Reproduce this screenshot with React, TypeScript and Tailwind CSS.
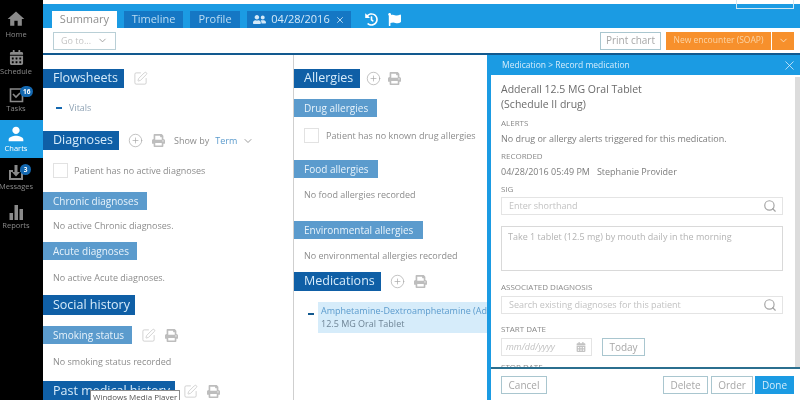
import { ChevronDown, CirclePlus, Search, SquarePen, X } from "lucide-react";
import { ReactNode } from "react";
import { FaCalendarAlt, FaFlag, FaHistory, FaPrint, FaUserFriends } from "react-icons/fa";
import { MdHome, MdPerson } from "react-icons/md";

const SectionTitle = ({ children, className = "" }: { children: ReactNode; className?: string }) => (
  <div className={`flex h-[19px] items-center whitespace-nowrap bg-[#0f5fa6] px-[10px] text-[12.5px] font-medium text-[#d7ecfb] ${className}`}>
    {children}
  </div>
);

const SubTitle = ({ children, className = "" }: { children: ReactNode; className?: string }) => (
  <div className={`flex h-[18px] items-center whitespace-nowrap bg-[#5b9bcd] px-[10px] text-[10px] text-[#e8f3fb] ${className}`}>
    {children}
  </div>
);

const Note = ({ children, className = "" }: { children: ReactNode; className?: string }) => (
  <p className={`pl-[10px] text-[9px] leading-[12px] text-[#8c8c8c] ${className}`}>{children}</p>
);

const Edit = () => <SquarePen size={15} strokeWidth={1.2} className="text-[#c4c4c4]" />;
const Plus = () => <CirclePlus size={15} strokeWidth={1.1} className="text-[#a8a8a8]" />;
const Printer = () => <FaPrint size={13} className="text-[#bdbdbd]" />;

const Checkbox = () => <div className="h-[15px] w-[15px] border border-[#e2e2e2]" />;

const Label = ({ children, className = "" }: { children: ReactNode; className?: string }) => (
  <p className={`text-[8px] leading-[10px] text-[#8a8a8a] ${className}`}>{children}</p>
);

const SearchInput = ({ text, className = "" }: { text: string; className?: string }) => (
  <div className={`flex h-[18px] w-[282px] items-center justify-between border border-[#e4e4e4] pl-[7px] pr-[5px] ${className}`}>
    <span className="text-[9px] text-[#c2c2c2]">{text}</span>
    <Search size={14} strokeWidth={2} className="text-[#a3a3a3]" />
  </div>
);

const OutlineButton = ({ children, className = "" }: { children: ReactNode; className?: string }) => (
  <div className={`flex h-[18px] items-center justify-center border border-[#a9c6cf] text-[10px] text-[#a7a7a7] ${className}`}>
    {children}
  </div>
);

const NavItem = ({ label, icon, active, badge, className = "" }: { label: string; icon: ReactNode; active?: boolean; badge?: string; className?: string }) => (
  <div className={`relative flex w-[43px] flex-col items-center pr-[11px] ${active ? "bg-[#1b9be3] text-white" : "text-[#8a8a8a]"} ${className}`}>
    {icon}
    <span className="whitespace-nowrap text-[7.5px] leading-[10px]">{label}</span>
    {badge && (
      <span className="absolute left-[20px] top-[0px] flex h-[11px] min-w-[11px] items-center justify-center rounded-full bg-[#1468b0] px-[3px] text-[6.5px] font-bold text-white">
        {badge}
      </span>
    )}
  </div>
);

const Sidebar = () => (
  <div className="flex h-[400px] w-[43px] shrink-0 flex-col bg-black pt-[9px]">
    <NavItem label="Home" icon={<MdHome size={20} />} />
    <NavItem label="Schedule" icon={<FaCalendarAlt size={15} className="my-[1px]" />} className="mt-[10px]" />
    <NavItem
      label="Tasks"
      badge="16"
      className="mt-[10px]"
      icon={
        <svg width="15" height="17" viewBox="0 0 15 17" fill="none" stroke="currentColor" strokeWidth="1.6">
          <path d="M13 3H1.5v12.5H13.500V8" />
          <path d="M4 8l3 3 4-4" />
        </svg>
      }
    />
    <NavItem
      label="Charts"
      active
      className="mt-[7px] h-[38px] justify-center"
      icon={<MdPerson size={22} className="-my-[2px]" />}
    />
    <NavItem
      label="Messages"
      badge="3"
      className="mt-[6px]"
      icon={
        <svg width="16" height="17" viewBox="0 0 16 17" fill="currentColor">
          <path d="M1 6h4v2H3v6h10V8h-1V6h3v10H1z" />
          <path d="M6.5 1h3v7h2.500L8 12.500 4 8h2.500z" />
        </svg>
      }
    />
    <NavItem
      label="Reports"
      className="mt-[13px]"
      icon={
        <svg width="15" height="16" viewBox="0 0 15 16" fill="currentColor">
          <rect x="0.500" y="9" width="3.500" height="7" />
          <rect x="5.500" y="1" width="3.500" height="15" />
          <rect x="10.500" y="5" width="3.500" height="11" />
        </svg>
      }
    />
  </div>
);

const TopBar = () => (
  <div className="flex h-[24px] items-end bg-[#1b9be3] pl-[9px] text-[11px]">
    <div className="flex h-[17px] w-[65px] items-center justify-center bg-white text-[#8f8f8f]">Summary</div>
    <div className="ml-[7px] flex h-[17px] w-[59px] items-center justify-center bg-[#1577c4] text-[#bcdcf2]">Timeline</div>
    <div className="ml-[7px] flex h-[17px] w-[50px] items-center justify-center bg-[#1577c4] text-[#bcdcf2]">Profile</div>
    <div className="ml-[7px] flex h-[17px] w-[104px] items-center justify-center gap-[5px] bg-[#1577c4] text-[#d4e9f8]">
      <FaUserFriends size={13} />
      <span>04/28/2016</span>
      <X size={10} />
    </div>
    <FaHistory size={13} className="mb-[2px] ml-[14px] text-white" />
    <FaFlag size={13} className="mb-[2px] ml-[10px] text-white" />
  </div>
);

const ActionBar = () => (
  <div className="flex h-[27px] items-center justify-between border-b-2 border-[#12598f] pl-[10px] pr-[6px]">
    <div className="flex h-[18px] w-[63px] items-center justify-between border border-[#b9cfd6] px-[7px] text-[9px] text-[#c4c4c4]">
      <span>Go to...</span>
      <ChevronDown size={11} className="text-[#9d9d9d]" />
    </div>
    <div className="flex items-center">
      <OutlineButton className="w-[61px] text-[9.500px]">Print chart</OutlineButton>
      <div className="ml-[5px] flex h-[18px] w-[105px] items-center justify-center bg-[#f7902c] text-[8.500px] text-[#fbd4a6]">
        New encounter (SOAP)
      </div>
      <div className="ml-[1px] flex h-[18px] w-[22px] items-center justify-center bg-[#f7902c] text-[#fbe0c0]">
        <ChevronDown size={11} />
      </div>
    </div>
  </div>
);

const LeftColumn = () => (
  <div className="w-[250px] shrink-0 overflow-hidden pt-[14px]">
    <div className="flex items-center gap-[9px]">
      <SectionTitle className="w-[81px]">Flowsheets</SectionTitle>
      <Edit />
    </div>
    <div className="mt-[14px] flex items-center gap-[7px] pl-[13px] text-[9px] leading-[12px] text-[#8fa3b5]">
      <span className="h-[2px] w-[6px] bg-[#1468b0]" />
      Vitals
    </div>
    <div className="mt-[17px] flex items-center">
      <SectionTitle className="w-[76px]">Diagnoses</SectionTitle>
      <span className="ml-[9px]"><Plus /></span>
      <span className="ml-[9px]"><Printer /></span>
      <span className="ml-[9px] text-[9px] text-[#8c8c8c]">Show by</span>
      <span className="ml-[6px] text-[9px] text-[#5b9bcd]">Term</span>
      <ChevronDown size={12} className="ml-[5px] text-[#9d9d9d]" />
    </div>
    <div className="mt-[13px] flex items-center gap-[6px] pl-[10px]">
      <Checkbox />
      <span className="text-[9px] text-[#8c8c8c]">Patient has no active diagnoses</span>
    </div>
    <SubTitle className="mt-[14px] w-[104px]">Chronic diagnoses</SubTitle>
    <Note className="mt-[10px]">No active Chronic diagnoses.</Note>
    <SubTitle className="mt-[10px] w-[94px]">Acute diagnoses</SubTitle>
    <Note className="mt-[12px]">No active Acute diagnoses.</Note>
    <SectionTitle className="mt-[11px] h-[20px] w-[92px]">Social history</SectionTitle>
    <div className="mt-[11px] flex items-center">
      <SubTitle className="w-[89px]">Smoking status</SubTitle>
      <span className="ml-[9px]"><Edit /></span>
      <span className="ml-[9px]"><Printer /></span>
    </div>
    <Note className="mt-[12px]">No smoking status recorded</Note>
    <div className="mt-[13px] flex items-center">
      <SectionTitle className="h-[20px] w-[132px]">Past medical history</SectionTitle>
      <span className="ml-[8px]"><Edit /></span>
      <span className="ml-[9px]"><Printer /></span>
    </div>
  </div>
);

const MiddleColumn = () => (
  <div className="w-[194px] shrink-0 overflow-hidden border-l border-[#cfcfcf] pt-[14px]">
    <div className="flex items-center">
      <SectionTitle className="h-[18px] w-[66px]">Allergies</SectionTitle>
      <span className="ml-[6px]"><Plus /></span>
      <span className="ml-[7px]"><Printer /></span>
    </div>
    <SubTitle className="mt-[11px] w-[83px]">Drug allergies</SubTitle>
    <div className="mt-[11px] flex items-center gap-[7px] pl-[10px]">
      <Checkbox />
      <span className="whitespace-nowrap text-[9px] text-[#8c8c8c]">Patient has no known drug allergies</span>
    </div>
    <SubTitle className="mt-[17px] w-[84px]">Food allergies</SubTitle>
    <Note className="mt-[11px]">No food allergies recorded</Note>
    <SubTitle className="mt-[20px] w-[129px]">Environmental allergies</SubTitle>
    <Note className="mt-[11px]">No environmental allergies recorded</Note>
    <div className="mt-[10px] flex items-center">
      <SectionTitle className="w-[87px]">Medications</SectionTitle>
      <span className="ml-[9px]"><Plus /></span>
      <span className="ml-[9px]"><Printer /></span>
    </div>
    <div className="mt-[11px] flex items-start">
      <span className="ml-[14px] mt-[11px] h-[2px] w-[6px] shrink-0 bg-[#12598f]" />
      <div className="ml-[4px] h-[31px] flex-1 overflow-hidden bg-[#d6ecfa] py-[3px] pl-[3px] text-[9px] leading-[12.500px]">
        <p className="whitespace-nowrap text-[#5b9bcd]">Amphetamine-Dextroamphetamine (Ade</p>
        <p className="text-[#6f8596]">12.5 MG Oral Tablet</p>
      </div>
    </div>
  </div>
);

const MedicationPanel = () => (
  <div className="flex min-w-0 flex-1 flex-col border-l-4 border-[#1b9be3]">
    <div className="flex h-[20px] shrink-0 items-center justify-between bg-[#1b9be3] pl-[11px] pr-[3px] text-[8.500px] text-[#d4ecfb]">
      <span>Medication &gt; Record medication</span>
      <X size={15} strokeWidth={1.2} className="text-[#e3f3fc]" />
    </div>
    <div className="relative min-h-0 flex-1 overflow-hidden pl-[10px] pt-[7px]">
      <div className="absolute bottom-0 right-0 top-[2px] w-[5px] bg-[#dcdcdc]" />
      <p className="text-[10.500px] leading-[14.500px] text-[#6b6b6b]">Adderall 12.5 MG Oral Tablet</p>
      <p className="text-[10.500px] leading-[14.500px] text-[#6b6b6b]">(Schedule II drug)</p>
      <Label className="mt-[7px]">ALERTS</Label>
      <p className="mt-[5px] text-[9px] leading-[12px] text-[#7d7d7d]">No drug or allergy alerts triggered for this medication.</p>
      <Label className="mt-[6px]">RECORDED</Label>
      <p className="mt-[5px] text-[9px] leading-[12px] text-[#7d7d7d]">
        04/28/2016 05:49 PM&nbsp;&nbsp; Stephanie Provider
      </p>
      <Label className="mt-[6px]">SIG</Label>
      <SearchInput text="Enter shorthand" className="mt-[3px]" />
      <div className="mt-[11px] h-[45px] w-[282px] border border-[#d9d9d9] px-[6px] py-[3px] text-[9px] text-[#b3b3b3]">
        Take 1 tablet (12.5 mg) by mouth daily in the morning
      </div>
      <Label className="mt-[11px]">ASSOCIATED DIAGNOSIS</Label>
      <SearchInput text="Search existing diagnoses for this patient" className="mt-[4px]" />
      <Label className="mt-[10px]">START DATE</Label>
      <div className="mt-[4px] flex items-center">
        <div className="flex h-[18px] w-[91px] items-center justify-between border border-[#e4e4e4] pl-[4px] pr-[5px]">
          <span className="text-[9px] italic text-[#c2c2c2]">mm/dd/yyyy</span>
          <FaCalendarAlt size={10} className="text-[#c2c2c2]" />
        </div>
        <OutlineButton className="ml-[10px] w-[43px]">Today</OutlineButton>
      </div>
      <Label className="mt-[6px]">STOP DATE</Label>
    </div>
    <div className="flex h-[33px] shrink-0 items-center border-t-2 border-[#2b6f8f] pl-[10px] pr-[6px] pt-[1px]">
      <OutlineButton className="w-[46px]">Cancel</OutlineButton>
      <OutlineButton className="ml-auto w-[45px]">Delete</OutlineButton>
      <OutlineButton className="ml-[3px] w-[42px]">Order</OutlineButton>
      <div className="ml-[2px] flex h-[18px] w-[39px] items-center justify-center bg-[#1b9be3] text-[10px] text-[#d4ecfb]">Done</div>
    </div>
  </div>
);

export default function App() {
  return (
    <div className="relative flex h-[400px] w-[800px] overflow-hidden bg-white font-['Open_Sans',sans-serif] blur-[0.3px]">
      <Sidebar />
      <div className="flex min-w-0 flex-1 flex-col pt-[4px]">
        <TopBar />
        <ActionBar />
        <div className="flex min-h-0 flex-1">
          <LeftColumn />
          <MiddleColumn />
          <MedicationPanel />
        </div>
      </div>
      <div className="absolute right-[6px] top-[-1px] h-[10px] w-[58px] border border-[#d0e6f2]" />
      <div className="absolute left-[90px] top-[390px] whitespace-nowrap border border-[#8a8a8a] bg-white px-[2px] text-[8px] leading-[12px] text-[#555]">
        Windows Media Player
      </div>
    </div>
  );
}
